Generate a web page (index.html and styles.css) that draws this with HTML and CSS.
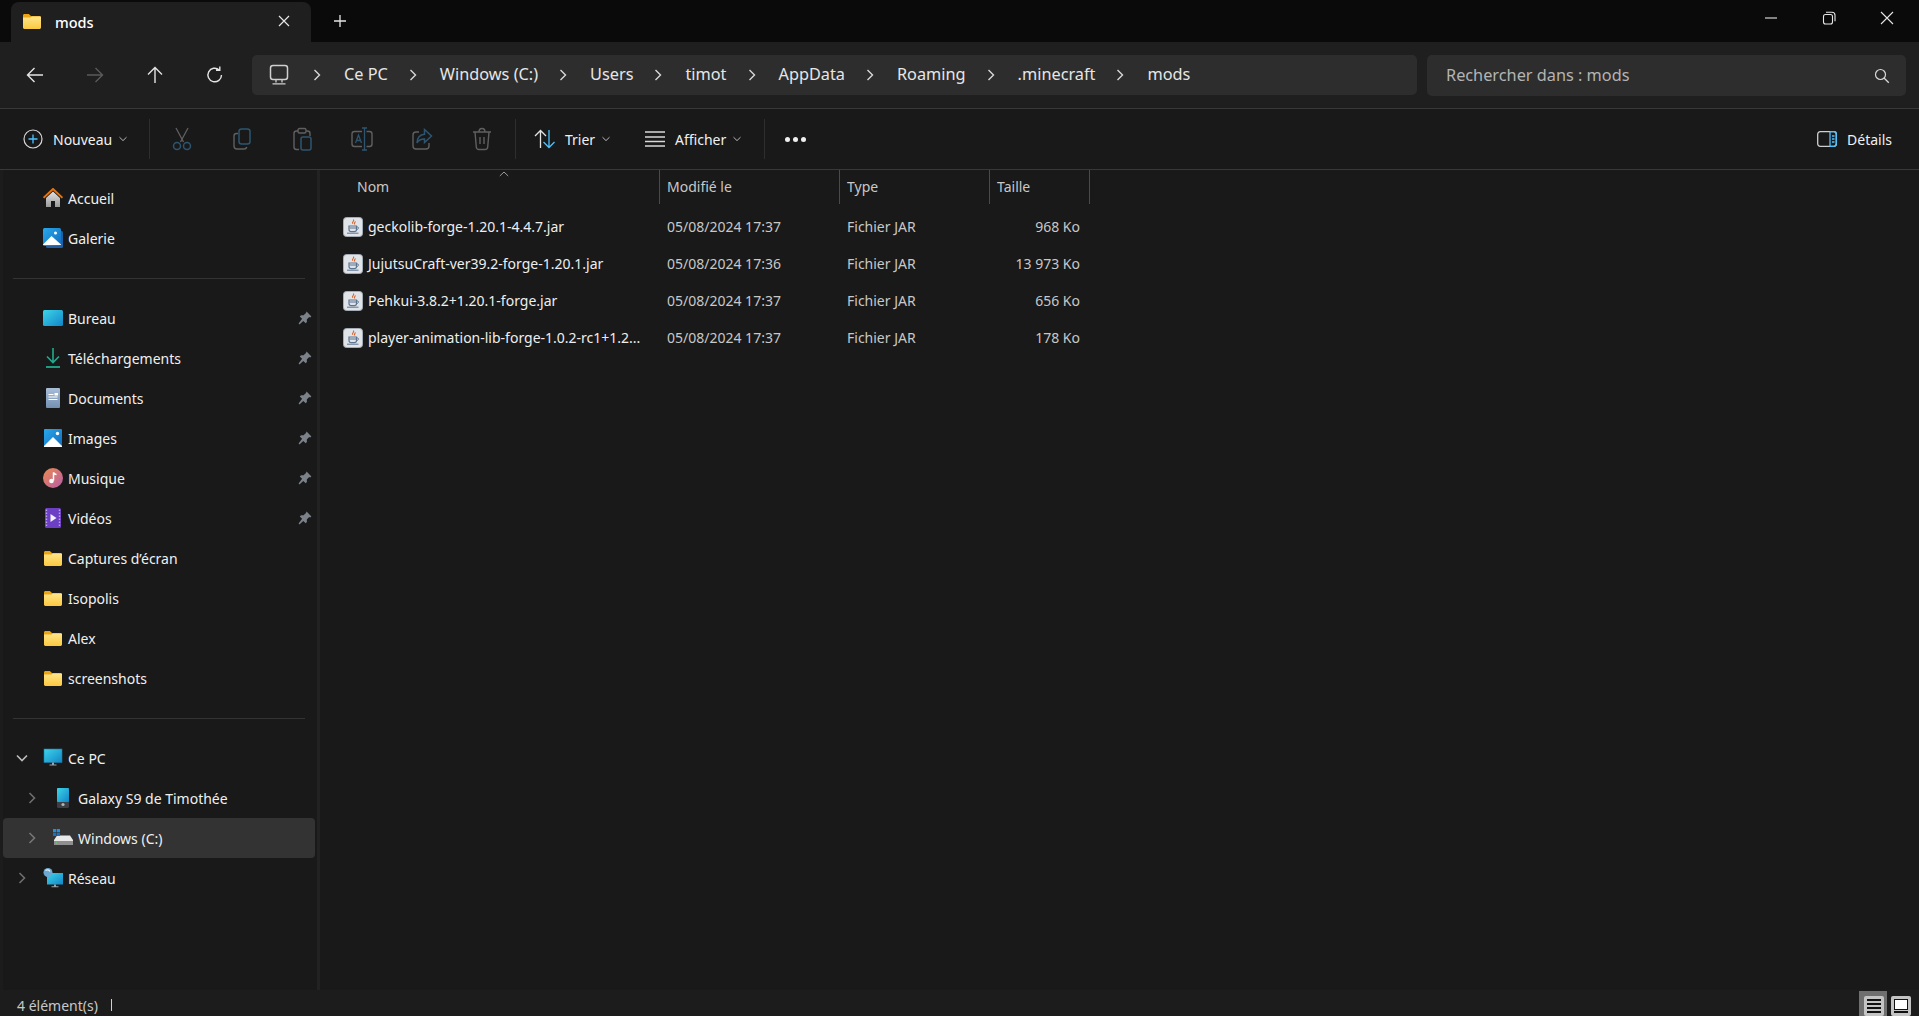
FILE: index.html
```html
<!DOCTYPE html>
<html lang="fr">
  <head>
    <meta charset="UTF-8" />
    <title>mods - Explorateur de fichiers</title>
    <link rel="stylesheet" href="styles.css">
  </head>
  <body>
    <svg class="defs" width="0" height="0">
      <defs>
        <linearGradient id="folder-front" x1="0" y1="0" x2="0" y2="1">
          <stop offset="0" stop-color="#ffe58a" />
          <stop offset="1" stop-color="#fcc93f" />
        </linearGradient>
        <linearGradient id="screen" x1="0" y1="0" x2="1" y2="1">
          <stop offset="0" stop-color="#3dd5e8" />
          <stop offset="1" stop-color="#1285c9" />
        </linearGradient>
        <linearGradient id="photo" x1="0" y1="0" x2="1" y2="1">
          <stop offset="0" stop-color="#2aa8ea" />
          <stop offset="1" stop-color="#0f6cc0" />
        </linearGradient>
        <linearGradient id="wall" x1="0" y1="0" x2="0" y2="1">
          <stop offset="0" stop-color="#e2e2e2" />
          <stop offset="1" stop-color="#9a9a9a" />
        </linearGradient>
        <linearGradient id="doc" x1="0" y1="0" x2="0" y2="1">
          <stop offset="0" stop-color="#a9bdd6" />
          <stop offset="1" stop-color="#7390b3" />
        </linearGradient>
        <linearGradient id="music" x1="0" y1="0" x2="1" y2="1">
          <stop offset="0" stop-color="#ee8a4e" />
          <stop offset="1" stop-color="#b65da8" />
        </linearGradient>
        <symbol id="folder" viewBox="0 0 20 20">
          <path d="M1 4.500C1 3.700 1.600 3 2.400 3h4.400l2.200 2H17.600c.8 0 1.400.7 1.400 1.500V9H1z" fill="#eba414" />
          <path d="M1 6.500h7.400L10 5.400h8.100c.5 0 .9.4.9.9v10.300c0 .8-.6 1.400-1.400 1.400H2.400c-.8 0-1.400-.6-1.400-1.400z" fill="url(#folder-front)" />
        </symbol>
        <symbol id="pin" viewBox="0 0 14 14">
          <path d="M8.600.6l4.800 4.800-1.200 1-1-.3-2.400 2.400.1 2.600-1.200 1.200-2.400-2.400L1.400 13.400.6 12.600l3.500-4.900-2.300-2.300L3 4.200l2.600.1L8 1.900z" fill="#7b8289" />
        </symbol>
        <symbol id="java" viewBox="0 0 20 20">
          <rect x=".5" y=".5" width="19" height="19" rx="3" fill="#e0e3e8" stroke="#a4acb6" />
          <path d="M10.500 2.500c1.200 1.500-2 2.600-.8 4.300M12.500 4.500c-1 1-1.800 1.500-.7 3" fill="none" stroke="#d9622b" stroke-width="1.100" />
          <path d="M6 9h7.500v3.500c0 1.400-1 2.200-2.300 2.200H8.300C7 14.700 6 13.900 6 12.500z" fill="none" stroke="#5b7591" stroke-width="1.200" />
          <path d="M6.500 11h6.500M13.500 10h1.200c1.100 0 1.100 2.500-1.200 2.700M4 16.200h11.500" fill="none" stroke="#5b7591" />
        </symbol>
        <symbol id="chev" viewBox="0 0 10 14">
          <path d="M2.500 2l5 5-5 5" fill="none" stroke="currentColor" stroke-width="1.400" />
        </symbol>
        <symbol id="chev-down" viewBox="0 0 10 6">
          <path d="M1.500 1.200L5 4.600l3.500-3.400" fill="none" stroke="currentColor" stroke-width="1" />
        </symbol>
      </defs>
    </svg>

    <div class="app">
      <header class="titlebar">
        <div class="tab">
          <svg class="tab-folder" width="20" height="20"><use href="#folder" /></svg>
          <span class="tab-name">mods</span>
          <svg class="tab-close" width="14" height="14" viewBox="0 0 14 14"><path d="M2 2l10 10M12 2L2 12" stroke="#e6e6e6" stroke-width="1.200" /></svg>
        </div>
        <svg class="tab-add" width="14" height="14" viewBox="0 0 14 14"><path d="M7 1v12M1 7h12" stroke="#e6e6e6" stroke-width="1.300" /></svg>
        <div class="win-btns">
          <svg width="14" height="14" viewBox="0 0 14 14"><path d="M1 7h12" stroke="#e6e6e6" stroke-width="1.100" /></svg>
          <svg width="14" height="14" viewBox="0 0 14 14"><rect x="1.500" y="3.500" width="9" height="9.500" rx="2" fill="none" stroke="#e6e6e6" stroke-width="1.100" /><path d="M4 1.300h6c1.800 0 3 1.200 3 3v6" fill="none" stroke="#e6e6e6" stroke-width="1.100" /></svg>
          <svg width="14" height="14" viewBox="0 0 14 14"><path d="M1 1l12 12M13 1L1 13" stroke="#e6e6e6" stroke-width="1.100" /></svg>
        </div>
      </header>

      <div class="addressbar">
        <div class="nav-btns">
          <svg width="60" height="20" viewBox="0 0 20 20"><path d="M18 10H2.500M9.500 3l-7 7 7 7" fill="none" stroke="#e4e4e4" stroke-width="1.400" /></svg>
          <svg width="60" height="20" viewBox="0 0 20 20"><path d="M2 10h15.500M10.500 3l7 7-7 7" fill="none" stroke="#5a5a5a" stroke-width="1.400" /></svg>
          <svg width="60" height="20" viewBox="0 0 20 20"><path d="M10 18V2.500M3 9.500l7-7 7 7" fill="none" stroke="#e4e4e4" stroke-width="1.400" /></svg>
          <svg width="60" height="20" viewBox="0 0 20 20"><path d="M16.500 10a6.800 6.800 0 1 1-2.300-5.100M14.800 1.500v3.800h-3.800" fill="none" stroke="#e4e4e4" stroke-width="1.400" /></svg>
        </div>
        <div class="crumbs">
          <svg class="crumb-pc" width="20" height="22" viewBox="0 0 20 22"><rect x="1.500" y="1.500" width="17" height="14" rx="2.500" fill="none" stroke="#cfcfcf" stroke-width="1.500" /><path d="M7 15.500v3M13 15.500v3M3.500 19.800h13" stroke="#cfcfcf" stroke-width="1.300" /></svg>
          <svg class="crumb-chev" width="10" height="14"><use href="#chev" /></svg>
          <span class="crumb">Ce PC</span>
          <svg class="crumb-chev" width="10" height="14"><use href="#chev" /></svg>
          <span class="crumb">Windows (C:)</span>
          <svg class="crumb-chev" width="10" height="14"><use href="#chev" /></svg>
          <span class="crumb">Users</span>
          <svg class="crumb-chev" width="10" height="14"><use href="#chev" /></svg>
          <span class="crumb">timot</span>
          <svg class="crumb-chev" width="10" height="14"><use href="#chev" /></svg>
          <span class="crumb">AppData</span>
          <svg class="crumb-chev" width="10" height="14"><use href="#chev" /></svg>
          <span class="crumb">Roaming</span>
          <svg class="crumb-chev" width="10" height="14"><use href="#chev" /></svg>
          <span class="crumb">.minecraft</span>
          <svg class="crumb-chev" width="10" height="14"><use href="#chev" /></svg>
          <span class="crumb">mods</span>
        </div>
        <div class="search">
          <span class="search-text">Rechercher dans : mods</span>
          <svg width="16" height="16" viewBox="0 0 16 16"><circle cx="6.500" cy="6.500" r="5" fill="none" stroke="#d8d8d8" stroke-width="1.200" /><path d="M10 10l4.800 4.800" stroke="#d8d8d8" stroke-width="1.300" /></svg>
        </div>
      </div>

      <div class="toolbar">
        <div class="tool tool-new">
          <svg width="20" height="20" viewBox="0 0 20 20"><circle cx="10" cy="10" r="9" fill="none" stroke="#d8d8d8" stroke-width="1.200" /><path d="M10 5.500v9M5.500 10h9" stroke="#4cc2ff" stroke-width="1.300" /></svg>
          <span>Nouveau</span>
          <svg class="caret" width="10" height="6"><use href="#chev-down" /></svg>
        </div>
        <i class="tool-sep"></i>
        <div class="tool-icons">
          <svg width="60" height="24" viewBox="0 0 24 24"><path d="M6 1l7.500 14M18 1l-7.500 14" stroke="#606060" stroke-width="1.300" fill="none" /><circle cx="7" cy="19" r="3.500" fill="none" stroke="#2d5570" stroke-width="1.500" /><circle cx="17" cy="19" r="3.500" fill="none" stroke="#2d5570" stroke-width="1.500" /></svg>
          <svg width="60" height="24" viewBox="0 0 24 24"><path d="M8 6.500H6.500C4.800 6.500 4 7.800 4 9v10c0 1.500 1.200 3 3 3h7c1.300 0 2.500-.8 2.800-2" fill="none" stroke="#606060" stroke-width="1.400" /><rect x="9" y="2" width="11" height="15" rx="2.500" fill="none" stroke="#2d5570" stroke-width="1.500" /></svg>
          <svg width="60" height="24" viewBox="0 0 24 24"><path d="M8 4H6.500C5 4 4 5 4 6.500V20c0 1.500 1 2.500 2.500 2.500H9M16 4h1.500C19 4 20 5 20 6.500V9" fill="none" stroke="#606060" stroke-width="1.400" /><rect x="8" y="1.500" width="8" height="4.500" rx="1.500" fill="none" stroke="#606060" stroke-width="1.400" /><rect x="11" y="10" width="10" height="13" rx="2" fill="none" stroke="#2d5570" stroke-width="1.500" /></svg>
          <svg width="60" height="24" viewBox="0 0 24 24"><path d="M12 4.500H4.500C3 4.500 2 5.500 2 7v10c0 1.500 1 2.500 2.500 2.500H12M16.500 4.500h3c1.500 0 2.500 1 2.500 2.500v10c0 1.500-1 2.500-2.500 2.500h-3" fill="none" stroke="#606060" stroke-width="1.400" /><path d="M14.500 1v22M12 1h5M12 23h5M5.500 16l3-8 3 8M6.500 13.500h4" fill="none" stroke="#2d5570" stroke-width="1.300" /></svg>
          <svg width="60" height="24" viewBox="0 0 24 24"><path d="M9 5H6C4 5 3 6.300 3 8v11c0 1.800 1.200 3 3 3h10c1.800 0 3-1.200 3-3v-3" fill="none" stroke="#606060" stroke-width="1.400" /><path d="M14.500 2.500L21.500 9l-7 6.500V12c-3.500 0-6 1-7.500 4 .2-5 3-8.500 7.500-8.800z" fill="none" stroke="#2d5570" stroke-width="1.500" /></svg>
          <svg width="60" height="24" viewBox="0 0 24 24"><path d="M3 5h18M9 5c0-2 1-3.500 3-3.500S15 3 15 5M5 5l1.300 15c.1 1.500 1.200 2.500 2.700 2.500h6c1.500 0 2.600-1 2.700-2.500L19 5M10 10v7M14 10v7" fill="none" stroke="#606060" stroke-width="1.400" /></svg>
        </div>
        <i class="tool-sep"></i>
        <div class="tool tool-sort">
          <svg width="22" height="20" viewBox="0 0 22 20"><path d="M6.500 19V2M1 7l5.500-5.500L12 7" fill="none" stroke="#e4e4e4" stroke-width="1.300" /><path d="M15 1v17.500M9.500 13l5.500 5.500 5.500-5.500" fill="none" stroke="#4cc2ff" stroke-width="1.300" /></svg>
          <span>Trier</span>
          <svg class="caret" width="10" height="6"><use href="#chev-down" /></svg>
        </div>
        <div class="tool tool-view">
          <svg width="20" height="16" viewBox="0 0 20 16"><path d="M0 1h20M0 6h20M0 10.500h20M0 15h20" stroke="#d8d8d8" stroke-width="1.300" /></svg>
          <span>Afficher</span>
          <svg class="caret" width="10" height="6"><use href="#chev-down" /></svg>
        </div>
        <i class="tool-sep"></i>
        <div class="tool-more"><b></b><b></b><b></b></div>
        <div class="tool tool-details">
          <svg width="20" height="16" viewBox="0 0 20 16"><rect x=".7" y=".7" width="18.600" height="14.600" rx="2.500" fill="none" stroke="#cfcfcf" stroke-width="1.300" /><path d="M13 .7h3.800c1.500 0 2.500 1 2.500 2.500v9.600c0 1.500-1 2.500-2.500 2.500H13M13 .7v14.600M15 5h2.500M15 8h2.500M15 11h2.500" fill="none" stroke="#4cc2ff" stroke-width="1.300" /></svg>
          <span>Détails</span>
        </div>
      </div>

      <main class="main">
        <nav class="nav">
          <div class="nav-item">
            <span class="twist"></span>
            <svg class="nav-icon" width="20" height="20" viewBox="0 0 20 20"><path d="M3 10l7-6.500 7 6.500v9H12v-6H8v6H3z" fill="url(#wall)" /><path d="M.5 9.800L10 1l9.500 8.800" fill="none" stroke="#e8720c" stroke-width="2" /></svg>
            <span>Accueil</span>
          </div>
          <div class="nav-item">
            <span class="twist"></span>
            <svg class="nav-icon" width="20" height="20" viewBox="0 0 20 20"><rect x="3" y="3" width="17" height="17" rx="1.500" fill="#1e5fa8" /><rect x="0" y="0" width="18" height="18" rx="1.500" fill="url(#photo)" /><path d="M0 16.500L8.500 8l9.500 8.500v.5H0z" fill="#fff" /><circle cx="12.500" cy="5" r="1.500" fill="#fff" /></svg>
            <span>Galerie</span>
          </div>
          <div class="nav-sep"></div>
          <div class="nav-item">
            <span class="twist"></span>
            <svg class="nav-icon" width="20" height="20" viewBox="0 0 20 20"><rect y="2" width="20" height="16" rx="1.500" fill="url(#screen)" /></svg>
            <span>Bureau</span>
            <svg class="pin" width="14" height="14"><use href="#pin" /></svg>
          </div>
          <div class="nav-item">
            <span class="twist"></span>
            <svg class="nav-icon" width="20" height="20" viewBox="0 0 20 20"><path d="M10 0v14M4 8.500l6 6 6-6" fill="none" stroke="#21ab8c" stroke-width="1.600" /><path d="M3 19h14" stroke="#21ab8c" stroke-width="1.800" /></svg>
            <span>Téléchargements</span>
            <svg class="pin" width="14" height="14"><use href="#pin" /></svg>
          </div>
          <div class="nav-item">
            <span class="twist"></span>
            <svg class="nav-icon" width="20" height="20" viewBox="0 0 20 20"><rect x="3" y="0" width="14" height="20" rx="1" fill="url(#doc)" /><path d="M5.500 6.500h5M5.500 9h9M5.500 11.500h9" stroke="#fff" stroke-width="1.100" /><rect x="11.500" y="5" width="3.500" height="2.500" fill="#fff" /></svg>
            <span>Documents</span>
            <svg class="pin" width="14" height="14"><use href="#pin" /></svg>
          </div>
          <div class="nav-item">
            <span class="twist"></span>
            <svg class="nav-icon" width="20" height="20" viewBox="0 0 20 20"><rect x="1" y="1" width="18" height="18" rx="1" fill="url(#photo)" /><path d="M1 18L10 9l9 9v1H1z" fill="#fff" /><circle cx="14.500" cy="5.500" r="1.700" fill="#fff" /></svg>
            <span>Images</span>
            <svg class="pin" width="14" height="14"><use href="#pin" /></svg>
          </div>
          <div class="nav-item">
            <span class="twist"></span>
            <svg class="nav-icon" width="20" height="20" viewBox="0 0 20 20"><circle cx="10" cy="10" r="10" fill="url(#music)" /><path d="M10.500 4.500v8" stroke="#fff" stroke-width="1.500" /><path d="M10.500 4.500c.5 1.500 2.500 2 3 2" fill="none" stroke="#fff" stroke-width="1.500" /><circle cx="8.500" cy="13" r="2.300" fill="#fff" /></svg>
            <span>Musique</span>
            <svg class="pin" width="14" height="14"><use href="#pin" /></svg>
          </div>
          <div class="nav-item">
            <span class="twist"></span>
            <svg class="nav-icon" width="20" height="20" viewBox="0 0 20 20"><rect x="2" y="0" width="16" height="20" rx="1.500" fill="#6d3fc4" /><path d="M7.500 6v8l6-4z" fill="#f2f0fa" /><path d="M3.500 1.500v17M16.500 1.500v17" stroke="#b9a2ea" stroke-width="1.400" stroke-dasharray="1.500 1.500" /></svg>
            <span>Vidéos</span>
            <svg class="pin" width="14" height="14"><use href="#pin" /></svg>
          </div>
          <div class="nav-item">
            <span class="twist"></span>
            <svg class="nav-icon" width="20" height="20"><use href="#folder" /></svg>
            <span>Captures d’écran</span>
          </div>
          <div class="nav-item">
            <span class="twist"></span>
            <svg class="nav-icon" width="20" height="20"><use href="#folder" /></svg>
            <span>Isopolis</span>
          </div>
          <div class="nav-item">
            <span class="twist"></span>
            <svg class="nav-icon" width="20" height="20"><use href="#folder" /></svg>
            <span>Alex</span>
          </div>
          <div class="nav-item">
            <span class="twist"></span>
            <svg class="nav-icon" width="20" height="20"><use href="#folder" /></svg>
            <span>screenshots</span>
          </div>
          <div class="nav-sep"></div>
          <div class="nav-item">
            <span class="twist"><svg width="12" height="8" viewBox="0 0 12 8"><path d="M1 1.500l5 5 5-5" fill="none" stroke="#bdbdbd" stroke-width="1.600" /></svg></span>
            <svg class="nav-icon" width="20" height="20" viewBox="0 0 20 20"><rect x="1" y="1" width="18" height="13.500" fill="url(#screen)" stroke="#1a7da8" stroke-width=".6" /><path d="M9 14.500h2v2H9zM6.500 16.500h7v1h-7z" fill="#9aa3ab" /></svg>
            <span>Ce PC</span>
          </div>
          <div class="nav-item sub">
            <span class="twist"><svg width="8" height="12" viewBox="0 0 8 12"><path d="M1.500 1l5 5-5 5" fill="none" stroke="#6e6e6e" stroke-width="1.600" /></svg></span>
            <svg class="nav-icon" width="20" height="20" viewBox="0 0 20 20"><rect x="4" y="0" width="12" height="20" rx="1.500" fill="#3c3f44" /><rect x="4" y="0" width="12" height="14" rx="1" fill="url(#screen)" /><circle cx="10" cy="16.500" r="1.600" fill="#aeb4ba" /></svg>
            <span>Galaxy S9 de Timothée</span>
          </div>
          <div class="nav-item sub active">
            <span class="twist"><svg width="8" height="12" viewBox="0 0 8 12"><path d="M1.500 1l5 5-5 5" fill="none" stroke="#767676" stroke-width="1.600" /></svg></span>
            <svg class="nav-icon" width="20" height="20" viewBox="0 0 20 20"><path d="M4 7.500h13l3 4.500v2H1v-2z" fill="#e9e9e9" /><rect x="1" y="13" width="19" height="4" fill="#8f8f8f" /><rect x="0" y="1" width="3.200" height="3.200" fill="#1e90e0" /><rect x="3.800" y="1" width="3.200" height="3.200" fill="#1e90e0" /><rect x="0" y="4.800" width="3.200" height="3.200" fill="#1272c4" /><rect x="3.800" y="4.800" width="3.200" height="3.200" fill="#1272c4" /><circle cx="3.500" cy="15" r=".7" fill="#5fd35f" /></svg>
            <span>Windows (C:)</span>
          </div>
          <div class="nav-item">
            <span class="twist"><svg width="8" height="12" viewBox="0 0 8 12"><path d="M1.500 1l5 5-5 5" fill="none" stroke="#6e6e6e" stroke-width="1.600" /></svg></span>
            <svg class="nav-icon" width="20" height="20" viewBox="0 0 20 20"><rect x="4" y="5" width="16" height="11.500" fill="url(#screen)" /><path d="M11 16.500h2v2h-2zM8.500 18.300h7v1h-7z" fill="#9aa3ab" /><circle cx="5" cy="4.500" r="4.500" fill="#6ca8cf" /><path d="M2.500 2.500c1.500-1 3.500-1 4.500 1" fill="none" stroke="#dff0fa" stroke-width="1.200" /></svg>
            <span>Réseau</span>
          </div>
        </nav>

        <section class="files">
          <div class="file-head">
            <div class="col-head col-name">Nom<svg class="sort-caret" width="10" height="6" viewBox="0 0 10 6"><path d="M.8 5L5 1l4.200 4" fill="none" stroke="#9a9a9a" /></svg></div>
            <div class="col-head">Modifié le</div>
            <div class="col-head">Type</div>
            <div class="col-head">Taille</div>
          </div>
          <div class="file-row">
            <div class="cell-name"><svg width="20" height="20"><use href="#java" /></svg><span>geckolib-forge-1.20.1-4.4.7.jar</span></div>
            <div class="cell">05/08/2024 17:37</div>
            <div class="cell">Fichier JAR</div>
            <div class="cell cell-size">968 Ko</div>
          </div>
          <div class="file-row">
            <div class="cell-name"><svg width="20" height="20"><use href="#java" /></svg><span>JujutsuCraft-ver39.2-forge-1.20.1.jar</span></div>
            <div class="cell">05/08/2024 17:36</div>
            <div class="cell">Fichier JAR</div>
            <div class="cell cell-size">13 973 Ko</div>
          </div>
          <div class="file-row">
            <div class="cell-name"><svg width="20" height="20"><use href="#java" /></svg><span>Pehkui-3.8.2+1.20.1-forge.jar</span></div>
            <div class="cell">05/08/2024 17:37</div>
            <div class="cell">Fichier JAR</div>
            <div class="cell cell-size">656 Ko</div>
          </div>
          <div class="file-row">
            <div class="cell-name"><svg width="20" height="20"><use href="#java" /></svg><span>player-animation-lib-forge-1.0.2-rc1+1.2...</span></div>
            <div class="cell">05/08/2024 17:37</div>
            <div class="cell">Fichier JAR</div>
            <div class="cell cell-size">178 Ko</div>
          </div>
        </section>
      </main>

      <footer class="statusbar">
        <span class="status-count">4 élément(s)</span>
        <i class="status-sep"></i>
        <div class="view-btns">
          <div class="view-slot active">
            <div class="view-btn"><b></b><b></b><b></b><b></b></div>
          </div>
          <div class="view-slot">
            <div class="view-btn view-big"><u></u><b></b></div>
          </div>
        </div>
      </footer>
    </div>
  </body>
</html>
```

FILE: styles.css
```css
* {
  margin: 0;
  padding: 0;
  box-sizing: border-box;
}
html,
body {
  height: 100%;
  overflow: hidden;
}
body {
  background-color: #191919;
  color: #f0f0f0;
  font-family: "Noto Sans", "Open Sans", sans-serif;
  font-size: 14px;
}
.defs {
  position: absolute;
}
svg {
  display: block;
  flex-shrink: 0;
}
.app {
  height: 100%;
  display: flex;
  flex-direction: column;
}

/* title bar */
.titlebar {
  height: 42px;
  padding-top: 2px;
  padding-left: 11px;
  display: flex;
  align-items: center;
  background-color: #0a0a0a;
}
.tab {
  width: 300px;
  height: 40px;
  padding: 0 20px 2px 11px;
  display: flex;
  align-items: center;
  background-color: #1f1f1f;
  border-radius: 8px 8px 0 0;
}
.tab-name {
  margin-left: 13px;
  margin-top: 1px;
  font-size: 14.5px;
  font-weight: 500;
  color: #fff;
}
.tab-close {
  margin-left: auto;
}
.tab-add {
  margin-left: 22px;
  margin-bottom: 2px;
}
.win-btns {
  margin-left: auto;
  margin-bottom: 8px;
  padding-right: 25px;
  display: flex;
  gap: 44px;
}

/* address row */
.addressbar {
  height: 67px;
  padding-top: 13px;
  padding-left: 5px;
  display: flex;
  align-items: flex-start;
  background-color: #1f1f1f;
  border-bottom: 1px solid #383838;
}
.nav-btns {
  width: 247px;
  height: 40px;
  display: flex;
  align-items: center;
}
.crumbs {
  width: 1165px;
  height: 40px;
  padding-left: 17px;
  display: flex;
  align-items: center;
  background-color: #2d2d2d;
  border-radius: 5px;
  color: #e6e6e6;
  font-size: 16.3px;
}
.crumb {
  margin-bottom: 2px;
}
.crumb-chev {
  margin: 0 22px 0 20px;
  color: #d8d8d8;
}
.crumb-pc {
  margin-right: 3px;
}
.search {
  width: 479px;
  height: 41px;
  margin-left: 10px;
  padding: 0 16px 0 19px;
  display: flex;
  align-items: center;
  justify-content: space-between;
  background-color: #2d2d2d;
  border-radius: 5px;
  color: #b4b4b4;
  font-size: 16.3px;
}
.search-text {
  margin-bottom: 1px;
}

/* command bar */
.toolbar {
  height: 61px;
  display: flex;
  align-items: center;
  border-bottom: 1px solid #383838;
}
.tool {
  display: flex;
  align-items: center;
}
.tool-new {
  width: 149px;
  padding-left: 23px;
}
.tool-new span {
  margin-left: 10px;
}
.caret {
  margin-left: 6px;
  color: #b8b8b8;
}
.tool-sep {
  width: 1px;
  height: 40px;
  background-color: #2e2e2e;
}
.tool-icons {
  width: 365px;
  padding-left: 2px;
  display: flex;
}
.tool-sort {
  width: 115px;
  padding-left: 18px;
}
.tool-sort span {
  margin-left: 9px;
}
.tool-view {
  width: 133px;
  padding-left: 14px;
}
.tool-view span {
  margin-left: 10px;
}
.tool-more {
  margin-left: 20px;
  display: flex;
  gap: 3px;
}
.tool-more b {
  width: 5px;
  height: 5px;
  border-radius: 50%;
  background-color: #f0f0f0;
}
.tool-details {
  margin-left: auto;
  padding-right: 27px;
}
.tool-details span {
  margin-left: 10px;
}

/* nav pane */
.main {
  flex: 1;
  min-height: 0;
  display: flex;
}
.nav {
  width: 320px;
  padding-top: 8px;
  padding-right: 2px;
  border-left: 3px solid #1c1c1c;
  border-right: 3px solid #222222;
}
.nav-item {
  height: 40px;
  padding-left: 11px;
  display: flex;
  align-items: center;
  border-radius: 4px;
}
.nav-item.sub {
  padding-left: 21px;
}
.nav-item.active {
  background-color: #333333;
}
.twist {
  width: 16px;
  height: 16px;
  margin-right: 13px;
  display: flex;
  align-items: center;
  justify-content: center;
}
.nav-icon {
  margin-right: 5px;
}
.pin {
  margin-left: auto;
  margin-right: 3px;
}
.nav-sep {
  height: 40px;
  padding: 20px 10px 0;
}
.nav-sep::after {
  content: "";
  display: block;
  height: 1px;
  background-color: #333333;
}

/* file list */
.files {
  flex: 1;
  min-width: 0;
}
.file-head,
.file-row {
  display: grid;
  grid-template-columns: 340px 180px 150px 100px;
  width: 770px;
}
.file-head {
  height: 32px;
  margin-bottom: 6px;
}
.col-head {
  padding-left: 7px;
  line-height: 34px;
  color: #c8c8c8;
  border-right: 1px solid #4a4a4a;
  position: relative;
}
.col-name {
  padding-left: 37px;
}
.sort-caret {
  position: absolute;
  left: 179px;
  top: 1px;
}
.file-row {
  height: 37px;
  align-items: center;
}
.cell-name {
  padding: 0 11px 0 23px;
  display: flex;
  align-items: center;
  gap: 5px;
  min-width: 0;
  color: #eeeeee;
}
.cell-name span {
  white-space: nowrap;
}
.cell {
  padding-left: 7px;
  color: #c8c8c8;
}
.cell-size {
  padding-right: 10px;
  text-align: right;
}

/* status bar */
.statusbar {
  height: 26px;
  padding-left: 17px;
  display: flex;
  align-items: center;
  background-color: #1c1c1c;
  color: #c8c8c8;
}
.status-count,
.status-sep {
  margin-top: 4px;
}
.status-sep {
  width: 1px;
  height: 12px;
  margin-left: 13px;
  background-color: #d0d0d0;
}
.view-btns {
  height: 100%;
  margin-left: auto;
  padding-right: 4px;
  display: flex;
  align-items: flex-end;
}
.view-slot {
  width: 28px;
  height: 25px;
  padding: 5px 4px 0;
}
.view-slot.active {
  padding-left: 5px;
  background-color: #6f6f6f;
}
.view-btn {
  width: 20px;
  height: 20px;
  padding: 3px;
  display: flex;
  flex-direction: column;
  justify-content: space-between;
  background-color: #c4c4c4;
  border-radius: 2px;
}
.view-btn b {
  height: 2px;
  background-color: #111111;
}
.view-big u {
  flex: 1;
  background-color: #ffffff;
  border: 1px solid #111111;
  margin-bottom: 1px;
}
```
